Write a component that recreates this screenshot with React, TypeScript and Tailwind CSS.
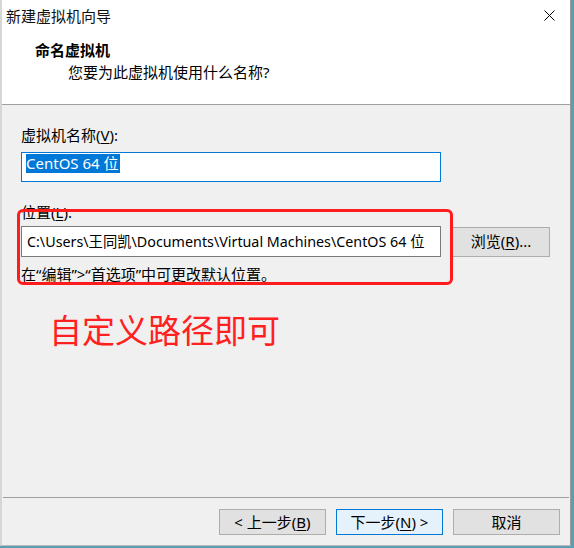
import React from 'react';

const ui = { fontFamily: '"Noto Sans", "Noto Sans CJK SC", sans-serif' };

function Key({ k }: { k: string }) {
  return <span className="underline underline-offset-2">{k}</span>;
}

function FooterButton({ children, primary }: { children: React.ReactNode; primary?: boolean }) {
  return (
    <button
      className={
        primary
          ? 'w-[107px] h-[26px] border border-[#0078d7] bg-[#e5f1fb] text-[15px] leading-none text-black'
          : 'w-[107px] h-[26px] border border-[#adadad] bg-[#e1e1e1] text-[15px] leading-none text-black'
      }
    >
      {children}
    </button>
  );
}

export default function App() {
  return (
    <div className="w-[574px] h-[548px] bg-[#5b9fb3] overflow-hidden" style={ui}>
      <div className="relative w-[571px] h-[546px] bg-[#f0f0f0] border-l-2 border-r border-b border-l-[#d6d6d6] border-r-[#9a9a9a] border-b-[#bdbdbd] flex flex-col text-black">
        {/* header */}
        <div className="h-[105px] bg-white border-b border-[#a0a0a0] flex flex-col">
          <div className="h-[31px] flex items-center justify-between pl-[4px] pr-[15px]">
            <span className="text-[15px] leading-[20px] text-[#111]">新建虚拟机向导</span>
            <svg width="11" height="11" viewBox="0 0 11 11" className="mt-[-1px]">
              <path d="M0.5 0.5 L10.5 10.5 M10.5 0.5 L0.5 10.5" stroke="#000" strokeWidth="1" />
            </svg>
          </div>
          <div className="mt-[9px] pl-[33px] text-[15px] leading-[20px] font-bold">命名虚拟机</div>
          <div className="mt-[2px] pl-[66px] text-[15px] leading-[20px]">您要为此虚拟机使用什么名称?</div>
        </div>

        {/* body */}
        <div className="flex flex-col pl-[19px] text-[15px]">
          <div className="mt-[20px] leading-[20px]">
            虚拟机名称(<Key k="V" />):
          </div>
          <div className="mt-[7px] w-[420px] h-[30px] border border-[#0078d7] bg-white flex items-start pt-[1px] pl-[4px]">
            <span className="bg-[#0078d7] text-white leading-[18px] pr-[1px] pb-[1px]">CentOS 64 位</span>
          </div>

          <div className="mt-[20px] leading-[20px]">
            位置(<Key k="L" />):
          </div>
          <div className="mt-[4px] flex items-center">
            <div className="w-[420px] h-[31px] border border-[#7a7a7a] bg-white flex items-center pl-[5px] text-[14.3px] leading-[20px] whitespace-nowrap">
              C:\Users\王同凯\Documents\Virtual Machines\CentOS 64 位
            </div>
            <button className="ml-[11px] w-[98px] h-[30px] border border-[#adadad] bg-[#e1e1e1] leading-none">
              浏览(<Key k="R" />)...
            </button>
          </div>
          <div className="mt-[7px] leading-[20px]">在“编辑”&gt;“首选项”中可更改默认位置。</div>

          <div className="mt-[27px] pl-[28px] text-[33px] leading-[40px] text-[#ff2020]">自定义路径即可</div>
        </div>

        {/* annotation frame */}
        <div className="absolute left-[15px] top-[209px] w-[436px] h-[76px] border-[3px] border-[#ff1c1c] rounded-[6px]" />

        {/* footer */}
        <div className="mt-auto h-[48px] border-t border-[#a0a0a0] ml-[1px] mr-[1px] flex items-start justify-end gap-[10px] pt-[11px] pr-[9px]">
          <FooterButton>
            &lt; 上一步(<Key k="B" />)
          </FooterButton>
          <FooterButton primary>
            下一步(<Key k="N" />) &gt;
          </FooterButton>
          <FooterButton>取消</FooterButton>
        </div>
      </div>
    </div>
  );
}
